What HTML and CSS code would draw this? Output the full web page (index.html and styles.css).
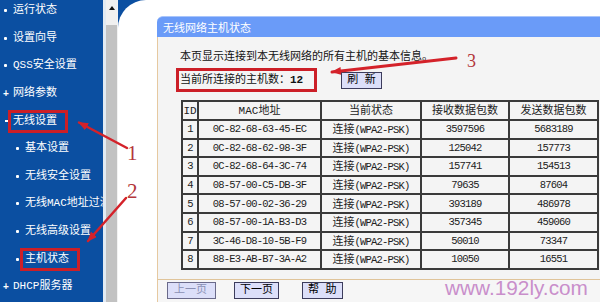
FILE: index.html
```html
<!DOCTYPE html>
<html lang="zh-CN">
<head>
<meta charset="utf-8">
<title>无线网络主机状态</title>
<link rel="stylesheet" href="styles.css">
</head>
<body>
<div class="page">
  <nav class="sidebar">
    <ul class="menu">
      <li class="item"><span class="marker dot"></span><span class="label">运行状态</span></li>
      <li class="item"><span class="marker dot"></span><span class="label">设置向导</span></li>
      <li class="item"><span class="marker dot"></span><span class="label">QSS安全设置</span></li>
      <li class="item"><span class="marker plus"></span><span class="label">网络参数</span></li>
      <li class="item"><span class="marker minus narrow"></span><span class="label hl">无线设置</span></li>
      <li class="item sub"><span class="marker dot"></span><span class="label">基本设置</span></li>
      <li class="item sub"><span class="marker dot"></span><span class="label">无线安全设置</span></li>
      <li class="item sub"><span class="marker dot"></span><span class="label">无线MAC地址过滤</span></li>
      <li class="item sub"><span class="marker dot"></span><span class="label">无线高级设置</span></li>
      <li class="item sub"><span class="marker dot narrow"></span><span class="label hl">主机状态</span></li>
      <li class="item"><span class="marker plus"></span><span class="label">DHCP服务器</span></li>
    </ul>
  </nav>
  <div class="scrollbar">
    <div class="sb-up"><span class="sb-arrow"></span></div>
    <div class="sb-thumb"></div>
  </div>
  <div class="main">
    <div class="canvas">
      <section class="panel">
        <h1 class="panel-title">无线网络主机状态</h1>
        <div class="panel-body">
          <p class="intro">本页显示连接到本无线网络的所有主机的基本信息。</p>
          <div class="count-row">
            <span class="hl count">当前所连接的主机数：<b>12</b></span>
            <button class="btn">刷 新</button>
          </div>
          <table class="hosts">
            <colgroup>
              <col class="c-id"><col class="c-mac"><col class="c-state"><col class="c-rx"><col class="c-tx">
            </colgroup>
            <thead>
              <tr><th>ID</th><th>MAC地址</th><th>当前状态</th><th>接收数据包数</th><th>发送数据包数</th></tr>
            </thead>
            <tbody>
              <tr><td>1</td><td>0C-82-68-63-45-EC</td><td><span class="cjk">连接</span>(WPA2-PSK)</td><td>3597596</td><td>5683189</td></tr>
              <tr><td>2</td><td>0C-82-68-62-98-3F</td><td><span class="cjk">连接</span>(WPA2-PSK)</td><td>125042</td><td>157773</td></tr>
              <tr><td>3</td><td>0C-82-68-64-3C-74</td><td><span class="cjk">连接</span>(WPA2-PSK)</td><td>157741</td><td>154513</td></tr>
              <tr><td>4</td><td>08-57-00-C5-DB-3F</td><td><span class="cjk">连接</span>(WPA2-PSK)</td><td>79635</td><td>87604</td></tr>
              <tr><td>5</td><td>08-57-00-02-36-29</td><td><span class="cjk">连接</span>(WPA2-PSK)</td><td>393189</td><td>486978</td></tr>
              <tr><td>6</td><td>08-57-00-1A-B3-D3</td><td><span class="cjk">连接</span>(WPA2-PSK)</td><td>357345</td><td>459060</td></tr>
              <tr><td>7</td><td>3C-46-D8-10-5B-F9</td><td><span class="cjk">连接</span>(WPA2-PSK)</td><td>50010</td><td>73347</td></tr>
              <tr><td>8</td><td>88-E3-AB-B7-3A-A2</td><td><span class="cjk">连接</span>(WPA2-PSK)</td><td>10050</td><td>16551</td></tr>
            </tbody>
          </table>
        </div>
        <div class="panel-foot">
          <button class="btn" disabled>上一页</button>
          <button class="btn">下一页</button>
          <button class="btn help">帮 助</button>
        </div>
      </section>
    </div>
  </div>

  <div class="watermark">www.192ly.com</div>

  <svg class="annot" width="600" height="302" viewBox="0 0 600 302" aria-hidden="true">
    <defs>
      <marker id="ah" viewBox="0 0 10 8" refX="9" refY="4" markerWidth="10" markerHeight="8" markerUnits="userSpaceOnUse" orient="auto">
        <path d="M0,0 L10,4 L0,8 Z" fill="#d4222a"/>
      </marker>
    </defs>
    <line x1="127" y1="148" x2="79" y2="122.5" class="arrow" marker-end="url(#ah)"/>
    <line x1="126" y1="198" x2="88" y2="241" class="arrow" marker-end="url(#ah)"/>
    <line x1="456" y1="58" x2="332" y2="72" class="arrow thick" marker-end="url(#ah)"/>
    <text x="127" y="160" class="num">1</text>
    <text x="127" y="198" class="num">2</text>
    <text x="467" y="67" class="num small">3</text>
  </svg>
</div>
</body>
</html>
```
FILE: styles.css
```css
* { box-sizing: border-box; }

html, body {
  margin: 0;
  padding: 0;
}

body {
  width: 600px;
  height: 302px;
  overflow: hidden;
  background: #fff;
  color: #111;
  font-family: "Liberation Mono", "Noto Sans CJK SC", monospace;
  font-size: 11px;
}

.page {
  position: relative;
  display: flex;
  width: 600px;
  height: 302px;
  overflow: hidden;
}

/* ---------- sidebar ---------- */
.sidebar {
  flex: 0 0 103px;
  background: #0b4fa1;
  color: #fff;
  overflow: hidden;
}

.menu {
  list-style: none;
  margin: -3px 0 0;
  padding: 0;
}

.item {
  display: flex;
  align-items: center;
  height: 27.6px;
  padding-left: 4px;
  white-space: nowrap;
}

.item.sub { padding-left: 16px; }

.marker {
  flex: 0 0 9px;
  display: flex;
  align-items: center;
  height: 100%;
}

.marker.narrow { flex-basis: 4px; }

.marker.dot::before {
  content: "";
  width: 3px;
  height: 3px;
  background: #fff;
  border-radius: 1px;
}

.marker.plus::before {
  content: "+";
  font-family: "Liberation Sans", sans-serif;
  font-weight: bold;
  font-size: 10px;
  line-height: 10px;
  margin-left: -1px;
}

.marker.minus::before {
  content: "";
  width: 3px;
  height: 2px;
  margin-left: 1px;
  background: #fff;
}

.label { line-height: 15px; }

.hl {
  border: 3px solid #cc1f27;
  padding: 1px 8px 1px 2px;
}

/* ---------- scrollbar ---------- */
.scrollbar {
  flex: 0 0 15px;
  display: flex;
  flex-direction: column;
  border-left: 3px solid #e2eaf2;
  border-right: 1px solid #f2f2f2;
}

.sb-up {
  height: 25px;
  background: #f0f0f0;
  display: flex;
  justify-content: center;
  padding-top: 6px;
}

.sb-arrow {
  width: 0;
  height: 0;
  border-left: 3.5px solid transparent;
  border-right: 3.5px solid transparent;
  border-bottom: 4px solid #111;
}

.sb-thumb {
  flex: 1;
  background: #c2c2c2;
}

/* ---------- main frame ---------- */
.main {
  flex: 1;
  display: flex;
  background: #0b4fa1;
  min-width: 0;
}

.canvas {
  flex: 1;
  background: #fff;
  border-top-left-radius: 28px;
  padding: 16px 0 0 39px;
  overflow: hidden;
}

.panel { width: 470px; }

.panel-title {
  margin: 0;
  height: 21px;
  padding-left: 6px;
  border-top: 1px solid #a9c5fb;
  border-top-left-radius: 6px;
  background: #6a9bf8;
  color: #fff;
  font-size: 11px;
  font-weight: normal;
  line-height: 20px;
  font-family: "Noto Sans CJK SC", sans-serif;
}

.panel-body {
  background: #f4f4f4;
  border-left: 1px solid #e6c9a0;
  padding: 13px 0 9px 22px;
}

.intro {
  margin: 0;
  line-height: 14px;
}

.count-row {
  display: flex;
  align-items: center;
  margin-top: 4px;
}

.hl.count {
  margin-left: -4px;
  padding: 2px 11px 2px 1px;
  line-height: 14px;
}

.btn {
  font: inherit;
  font-size: 11px;
  height: 17px;
  padding: 0 5px;
  line-height: 15px;
  background: #dcdff9;
  border: 1px solid #3c3c5c;
  border-radius: 0;
  color: #000;
}

.count-row .btn { margin-left: 24px; }

/* ---------- table ---------- */
.hosts {
  margin: 8px 0 0 1px;
  width: 416px;
  table-layout: fixed;
  border-collapse: collapse;
}

.c-id { width: 16px; }
.c-mac { width: 123px; }
.c-state { width: 100px; }
.c-rx { width: 88px; }
.c-tx { width: 89px; }

.hosts th,
.hosts td {
  border: 2px solid #3a3a3a;
  padding: 0;
  text-align: center;
  line-height: 14px;
  white-space: nowrap;
  overflow: hidden;
}

.hosts th {
  height: 19px;
  font-size: 11px;
  font-weight: normal;
  color: #222;
}

.hosts td {
  height: 18.6px;
  font-size: 10.5px;
  letter-spacing: -0.8px;
  color: #222;
}

.cjk {
  font-family: "Noto Sans CJK SC", sans-serif;
  font-size: 11px;
  letter-spacing: 0;
}

/* ---------- footer ---------- */
.panel-foot {
  display: flex;
  align-items: center;
  gap: 18px;
  height: 24px;
  padding-left: 9px;
  background: #f6f6f6;
  border-top: 1px solid #e0c49a;
  border-bottom: 1px solid #e0c49a;
  border-left: 1px solid #e6c9a0;
}

.panel-foot .btn { height: 17px; }

.btn:disabled {
  color: #8a90b4;
  border-color: #6a6a8a;
  padding: 0 8px 0 6px;
}

.btn.help { margin-left: 5px; }

/* ---------- overlays ---------- */
.watermark {
  position: absolute;
  left: 445px;
  top: 277px;
  font-family: "Liberation Sans", sans-serif;
  font-size: 20.8px;
  line-height: 21px;
  color: #c98fcb;
}

.annot {
  position: absolute;
  left: 0;
  top: 0;
  pointer-events: none;
}

.arrow {
  stroke: #d4222a;
  stroke-width: 2.5;
  stroke-linecap: round;
}

.arrow.thick { stroke-width: 3; }

.num {
  font-family: "Liberation Serif", serif;
  font-size: 21px;
  fill: #b3363a;
}

.num.small { font-size: 18px; }
```
